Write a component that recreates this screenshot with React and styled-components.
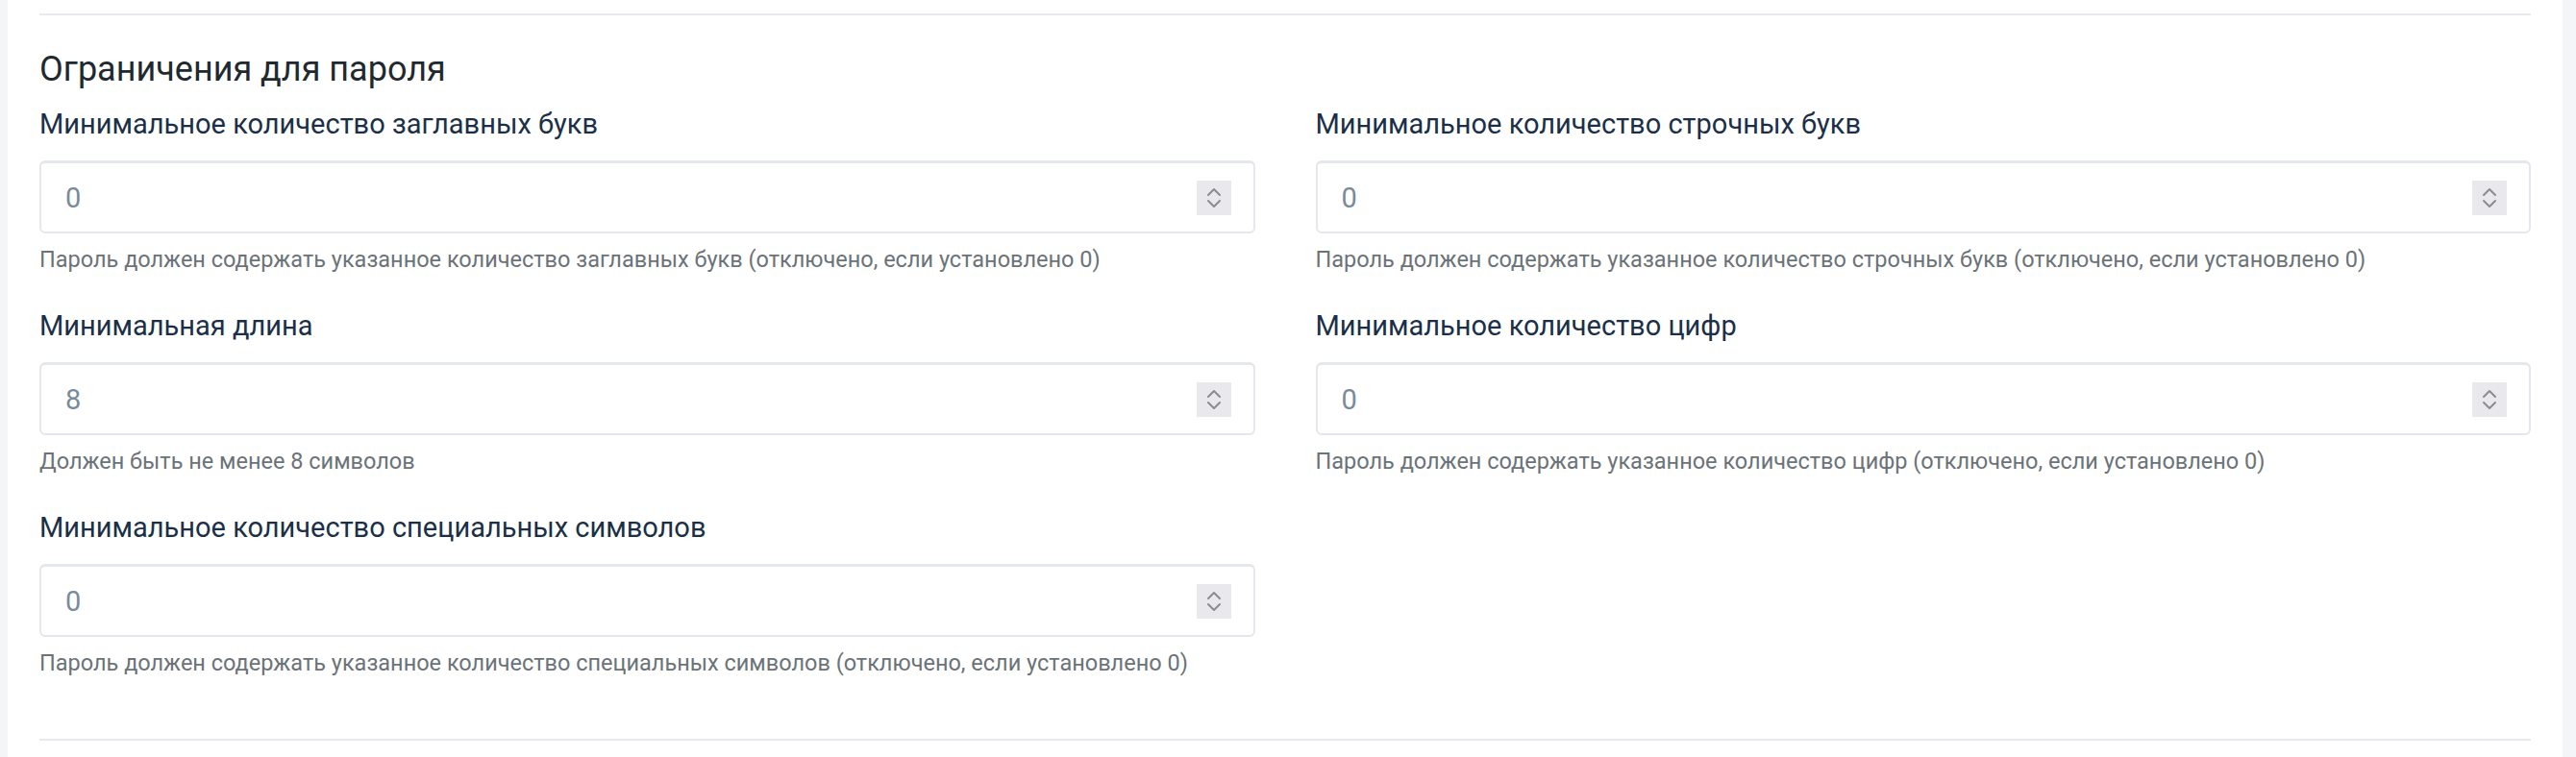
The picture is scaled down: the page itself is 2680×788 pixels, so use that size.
import styled, { createGlobalStyle } from "styled-components";

const GlobalStyle = createGlobalStyle`
  html, body {
    margin: 0;
    padding: 0;
    background: #ffffff;
    font-family: Roboto, "Noto Sans", "Liberation Sans", sans-serif;
  }
`;

const Page = styled.div`
  display: flex;
  width: 2680px;
  height: 788px;
  overflow: hidden;
  background: #ffffff;
`;

const SideStrip = styled.div`
  flex: 0 0 ${(props) => props.width}px;
  background: #f4f5f9;
`;

const Content = styled.div`
  flex: 1;
  padding: 14px 33px 0 33px;
`;

const Divider = styled.hr`
  margin: 0;
  border: none;
  height: 2px;
  background: #e6e9ed;
`;

const Title = styled.h2`
  margin: 34px 0 17px;
  font-size: 36px;
  line-height: 44px;
  font-weight: 400;
  color: #1f2a30;
`;

const Grid = styled.div`
  display: grid;
  grid-template-columns: 1fr 1fr;
  column-gap: 63px;
  row-gap: 36px;
  margin-bottom: 64px;
`;

const Field = styled.div`
  display: flex;
  flex-direction: column;
`;

const Label = styled.label`
  font-size: 29px;
  line-height: 36px;
  color: #1b3048;
  margin-bottom: 20px;
`;

const InputBox = styled.div`
  display: flex;
  align-items: center;
  height: 76px;
  box-sizing: border-box;
  border: 2px solid #e4e7eb;
  border-top-width: 3px;
  border-radius: 6px;
  padding: 0 23px 0 25px;
`;

const Value = styled.span`
  flex: 1;
  font-size: 29px;
  color: #798b9b;
`;

const Spinner = styled.div`
  width: 36px;
  height: 36px;
  background: #e8e8ed;
  display: flex;
  align-items: center;
  justify-content: center;
`;

const Helper = styled.div`
  margin-top: 12px;
  font-size: 23.5px;
  line-height: 30px;
  color: #6b7378;
`;

const SpinIcon = () => (
  <svg width="18" height="26" viewBox="0 0 18 26" fill="none" stroke="#8b8b98" strokeWidth="2" strokeLinecap="round" strokeLinejoin="round">
    <path d="M3 10l6-6 6 6" />
    <path d="M3 16l6 6 6-6" />
  </svg>
);

const fields = [
  {
    label: "Минимальное количество заглавных букв",
    value: "0",
    help: "Пароль должен содержать указанное количество заглавных букв (отключено, если установлено 0)",
  },
  {
    label: "Минимальное количество строчных букв",
    value: "0",
    help: "Пароль должен содержать указанное количество строчных букв (отключено, если установлено 0)",
  },
  {
    label: "Минимальная длина",
    value: "8",
    help: "Должен быть не менее 8 символов",
  },
  {
    label: "Минимальное количество цифр",
    value: "0",
    help: "Пароль должен содержать указанное количество цифр (отключено, если установлено 0)",
  },
  {
    label: "Минимальное количество специальных символов",
    value: "0",
    help: "Пароль должен содержать указанное количество специальных символов (отключено, если установлено 0)",
  },
];

const App = () => (
  <>
    <GlobalStyle />
    <Page>
      <SideStrip width={8} />
      <Content>
        <Divider />
        <Title>Ограничения для пароля</Title>
        <Grid>
          {fields.map((field) => (
            <Field key={field.label}>
              <Label>{field.label}</Label>
              <InputBox>
                <Value>{field.value}</Value>
                <Spinner>
                  <SpinIcon />
                </Spinner>
              </InputBox>
              <Helper>{field.help}</Helper>
            </Field>
          ))}
        </Grid>
        <Divider />
      </Content>
      <SideStrip width={14} />
    </Page>
  </>
);

export default App;
